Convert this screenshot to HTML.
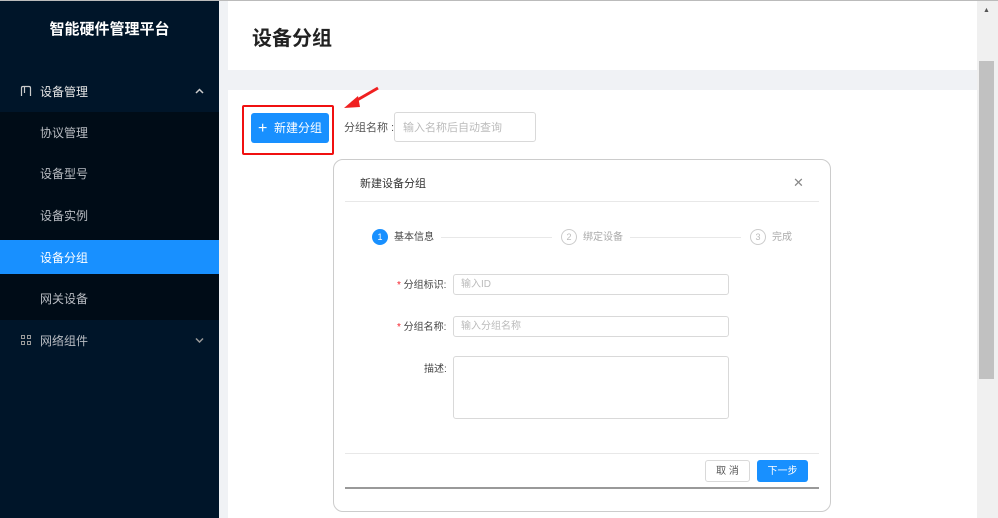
<!DOCTYPE html>
<html><head><meta charset="utf-8"><style>
*{margin:0;padding:0;box-sizing:border-box}
body{width:998px;height:518px;overflow:hidden;background:#f0f2f5;font-family:"Liberation Sans","Noto Sans CJK SC",sans-serif;position:relative}
.abs{position:absolute;line-height:1.3;white-space:nowrap}
.side{left:0;top:0;width:219px;height:518px;background:#001529}
.t{color:#fff}
</style></head><body>
<div class="abs side"></div>
<div class="abs" style="left:0;top:0;width:998px;height:1px;background:#bbb"></div>
<div class="abs t" style="left:0;top:20px;width:219px;text-align:center;font-size:15px;font-weight:bold">智能硬件管理平台</div>
<svg class="abs" style="left:20px;top:85px" width="12" height="12"><path d="M1.5 11 V3 Q1.5 1.5 3 1.5 H9 Q10.5 1.5 10.5 3 V11 M4.5 1.5 V8" stroke="#ccc" stroke-width="1.2" fill="none"/></svg>
<div class="abs" style="left:40px;top:85px;color:#e6e6e6;font-size:12px">设备管理</div>
<svg class="abs" style="left:195px;top:88px" width="9" height="6"><path d="M1 5 L4.5 1.5 L8 5" stroke="#ccc" stroke-width="1.5" fill="none"/></svg>
<div class="abs" style="left:0;top:112px;width:219px;height:208px;background:#000c17"></div>
<div class="abs" style="left:0;top:240px;width:219px;height:34px;background:#1890ff"></div>
<div class="abs" style="left:40px;top:126px;color:#b8bcc2;font-size:12px">协议管理</div>
<div class="abs" style="left:40px;top:167px;color:#b8bcc2;font-size:12px">设备型号</div>
<div class="abs" style="left:40px;top:209px;color:#b8bcc2;font-size:12px">设备实例</div>
<div class="abs t" style="left:40px;top:251px;font-size:12px">设备分组</div>
<div class="abs" style="left:40px;top:292px;color:#b8bcc2;font-size:12px">网关设备</div>
<div class="abs" style="left:21px;top:335px;width:10px;height:10px;display:grid;grid-template-columns:4px 4px;gap:2px"><i style="border:1px solid #999"></i><i style="border:1px solid #999"></i><i style="border:1px solid #999"></i><i style="border:1px solid #999"></i></div>
<div class="abs" style="left:40px;top:334px;color:#b8bcc2;font-size:12px">网络组件</div>
<svg class="abs" style="left:195px;top:337px" width="9" height="6"><path d="M1 1.5 L4.5 5 L8 1.5" stroke="#999" stroke-width="1.5" fill="none"/></svg>

<div class="abs" style="left:228px;top:1px;width:749px;height:69px;background:#fff"></div>
<div class="abs" style="left:252px;top:26px;font-size:20px;font-weight:bold;color:#222">设备分组</div>
<div class="abs" style="left:228px;top:90px;width:749px;height:428px;background:#fff"></div>

<div class="abs" style="left:242px;top:105px;width:92px;height:50px;border:2px solid #f01010;border-radius:2px"></div>
<div class="abs t" style="left:251px;top:113px;width:78px;height:30px;background:#1890ff;border-radius:3px;font-size:12px;line-height:30px;text-align:center"><span style="font-size:16px;vertical-align:-1px">+</span>&nbsp; 新建分组</div>
<svg class="abs" style="left:340px;top:85px" width="42" height="28"><path d="M38 3 L12 18" stroke="#f02020" stroke-width="3"/><path d="M4 23 L18 11 L20 22 Z" fill="#f02020"/></svg>
<div class="abs" style="left:344px;top:121px;font-size:11px;color:#555">分组名称 :</div>
<div class="abs" style="left:394px;top:112px;width:142px;height:30px;border:1px solid #d9d9d9;border-radius:3px;font-size:11px;color:#bbb;line-height:30px;padding-left:8px">输入名称后自动查询</div>

<div class="abs" style="left:333px;top:159px;width:498px;height:353px;background:#fff;border:1px solid #ccc;border-radius:10px"></div>
<div class="abs" style="left:360px;top:177px;font-size:11px;color:#333">新建设备分组</div>
<div class="abs" style="left:793px;top:175px;font-size:13px;color:#888">✕</div>
<div class="abs" style="left:345px;top:201px;width:474px;height:1px;background:#e8e8e8"></div>
<div class="abs t" style="left:372px;top:229px;width:16px;height:16px;border-radius:50%;background:#1890ff;font-size:9px;text-align:center;line-height:16px">1</div>
<div class="abs" style="left:394px;top:231px;font-size:10px;color:#444">基本信息</div>
<div class="abs" style="left:441px;top:237px;width:111px;height:1px;background:#e8e8e8"></div>
<div class="abs" style="left:561px;top:229px;width:16px;height:16px;border-radius:50%;border:1px solid #ccc;color:#bbb;font-size:9px;text-align:center;line-height:14px">2</div>
<div class="abs" style="left:583px;top:231px;font-size:10px;color:#aaa">绑定设备</div>
<div class="abs" style="left:630px;top:237px;width:111px;height:1px;background:#e8e8e8"></div>
<div class="abs" style="left:750px;top:229px;width:16px;height:16px;border-radius:50%;border:1px solid #ccc;color:#bbb;font-size:9px;text-align:center;line-height:14px">3</div>
<div class="abs" style="left:772px;top:231px;font-size:10px;color:#aaa">完成</div>

<div class="abs" style="left:397px;top:279px;font-size:10px;color:#444"><span style="color:#f5222d">*</span> 分组标识:</div>
<div class="abs" style="left:453px;top:274px;width:276px;height:21px;border:1px solid #d9d9d9;border-radius:3px;font-size:10px;color:#bbb;line-height:20px;padding-left:7px">输入ID</div>
<div class="abs" style="left:397px;top:321px;font-size:10px;color:#444"><span style="color:#f5222d">*</span> 分组名称:</div>
<div class="abs" style="left:453px;top:316px;width:276px;height:21px;border:1px solid #d9d9d9;border-radius:3px;font-size:10px;color:#bbb;line-height:20px;padding-left:7px">输入分组名称</div>
<div class="abs" style="left:424px;top:363px;font-size:10px;color:#444">描述:</div>
<div class="abs" style="left:453px;top:356px;width:276px;height:63px;border:1px solid #d9d9d9;border-radius:3px"></div>
<div class="abs" style="left:345px;top:453px;width:474px;height:1px;background:#e8e8e8"></div>
<div class="abs" style="left:705px;top:460px;width:45px;height:22px;border:1px solid #d9d9d9;border-radius:3px;font-size:10px;color:#555;text-align:center;line-height:21px">取 消</div>
<div class="abs t" style="left:757px;top:460px;width:51px;height:22px;background:#1890ff;border-radius:3px;font-size:10px;text-align:center;line-height:23px">下一步</div>
<div class="abs" style="left:345px;top:487px;width:474px;height:2px;background:#999"></div>

<div class="abs" style="left:977px;top:1px;width:21px;height:517px;background:#f0f0f0"></div>
<div class="abs" style="left:979px;top:61px;width:15px;height:318px;background:#c1c1c1"></div>
<div class="abs" style="left:983px;top:6px;font-size:7px;color:#555">▲</div>
</body></html>
